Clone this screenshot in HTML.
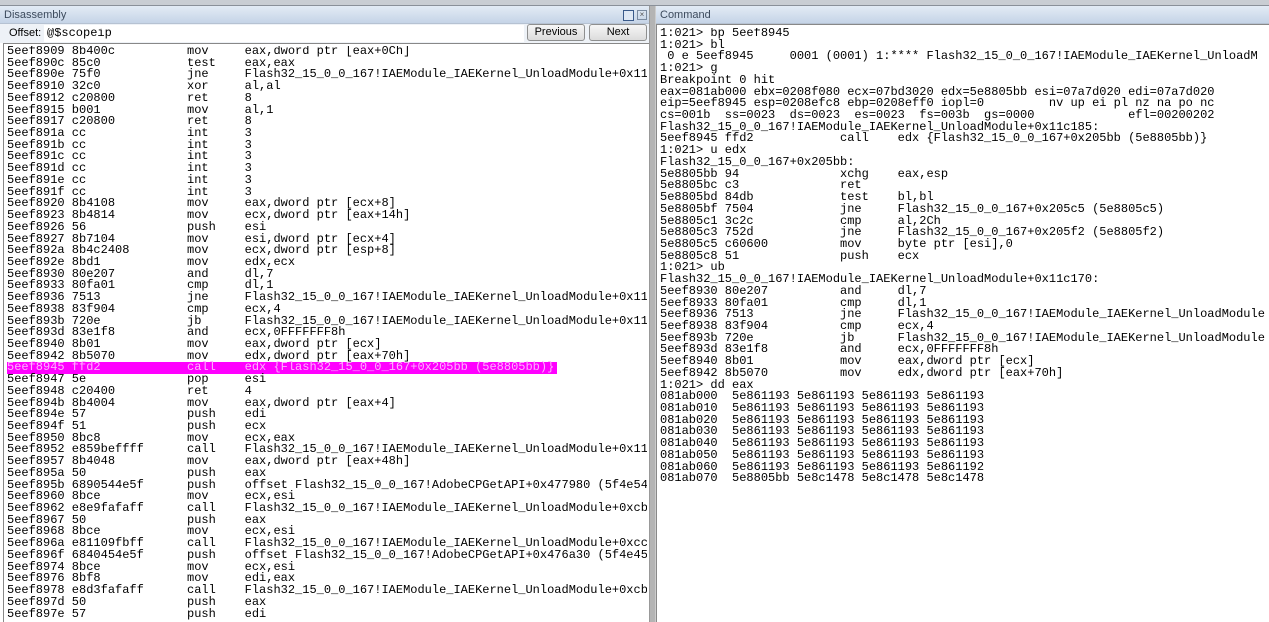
<!DOCTYPE html>
<html><head><meta charset="utf-8"><style>
*{margin:0;padding:0;box-sizing:border-box}
body{width:1269px;height:622px;overflow:hidden;background:#fff;position:relative;font-family:"Liberation Sans",sans-serif}
.top{position:absolute;left:0;top:0;width:1269px;height:6px;background:#c9cdd3;border-bottom:1px solid #8a9099}
.title{position:absolute;top:6px;height:18px;background:linear-gradient(#e3ebf5,#c5d4e7);font-size:11px;color:#3c4a5c;padding:3px 4px;border-bottom:1px solid #b6c2d2}
.split{position:absolute;left:649px;top:6px;width:7px;height:616px;background:#b4b4b4;border-left:1px solid #999;border-right:1px solid #ccc}
pre{position:absolute;font-family:"Liberation Mono",monospace;font-size:12px;line-height:11.72px;color:#000;white-space:pre;overflow:hidden}
.hl{background:#ff00ff;color:#ffb0ff;display:inline-block;width:550px}
.btn{position:absolute;top:24px;height:17px;border:1px solid #8e8f8f;border-radius:3px;background:linear-gradient(#f6f6f6,#dcdcdc);font-size:11px;text-align:center;line-height:15px;color:#000}
</style></head><body>
<div class="top"></div>
<div class="title" style="left:0;width:649px">Disassembly</div>
<div style="position:absolute;left:623px;top:10px;width:11px;height:11px;border:1px solid #3a5a8a;background:#dfe8f4"></div>
<div style="position:absolute;left:637px;top:10px;width:10px;height:10px;border:1px solid #7a8aa0;font-size:8px;line-height:8px;text-align:center;color:#555">×</div>
<div class="title" style="left:656px;width:613px">Command</div>
<div style="position:absolute;left:0;top:24px;width:649px;height:19px;background:#eef2f7"></div>
<div style="position:absolute;left:9px;top:27px;font-size:11px;color:#000">Offset:</div>
<div style="position:absolute;left:44px;top:25px;width:480px;height:17px;background:#fff"></div>
<pre style="left:47px;top:28px;">@$scopeip</pre>
<div class="btn" style="left:527px;width:58px">Previous</div>
<div class="btn" style="left:589px;width:58px">Next</div>
<div style="position:absolute;left:3px;top:43px;width:646px;height:579px;border:1px solid #888;border-right:none;border-bottom:none"></div>
<div class="split"></div>
<div style="position:absolute;left:656px;top:24px;width:613px;height:598px;border:1px solid #888;border-right:none;border-bottom:none"></div>
<pre style="left:7px;top:46px;width:640px;height:576px">5eef8909 8b400c          mov     eax,dword ptr [eax+0Ch]
5eef890c 85c0            test    eax,eax
5eef890e 75f0            jne     Flash32_15_0_0_167!IAEModule_IAEKernel_UnloadModule+0x11
5eef8910 32c0            xor     al,al
5eef8912 c20800          ret     8
5eef8915 b001            mov     al,1
5eef8917 c20800          ret     8
5eef891a cc              int     3
5eef891b cc              int     3
5eef891c cc              int     3
5eef891d cc              int     3
5eef891e cc              int     3
5eef891f cc              int     3
5eef8920 8b4108          mov     eax,dword ptr [ecx+8]
5eef8923 8b4814          mov     ecx,dword ptr [eax+14h]
5eef8926 56              push    esi
5eef8927 8b7104          mov     esi,dword ptr [ecx+4]
5eef892a 8b4c2408        mov     ecx,dword ptr [esp+8]
5eef892e 8bd1            mov     edx,ecx
5eef8930 80e207          and     dl,7
5eef8933 80fa01          cmp     dl,1
5eef8936 7513            jne     Flash32_15_0_0_167!IAEModule_IAEKernel_UnloadModule+0x11
5eef8938 83f904          cmp     ecx,4
5eef893b 720e            jb      Flash32_15_0_0_167!IAEModule_IAEKernel_UnloadModule+0x11
5eef893d 83e1f8          and     ecx,0FFFFFFF8h
5eef8940 8b01            mov     eax,dword ptr [ecx]
5eef8942 8b5070          mov     edx,dword ptr [eax+70h]
<span class="hl">5eef8945 ffd2            call    edx {Flash32_15_0_0_167+0x205bb (5e8805bb)}</span>
5eef8947 5e              pop     esi
5eef8948 c20400          ret     4
5eef894b 8b4004          mov     eax,dword ptr [eax+4]
5eef894e 57              push    edi
5eef894f 51              push    ecx
5eef8950 8bc8            mov     ecx,eax
5eef8952 e859beffff      call    Flash32_15_0_0_167!IAEModule_IAEKernel_UnloadModule+0x11
5eef8957 8b4048          mov     eax,dword ptr [eax+48h]
5eef895a 50              push    eax
5eef895b 6890544e5f      push    offset Flash32_15_0_0_167!AdobeCPGetAPI+0x477980 (5f4e54
5eef8960 8bce            mov     ecx,esi
5eef8962 e8e9fafaff      call    Flash32_15_0_0_167!IAEModule_IAEKernel_UnloadModule+0xcb
5eef8967 50              push    eax
5eef8968 8bce            mov     ecx,esi
5eef896a e81109fbff      call    Flash32_15_0_0_167!IAEModule_IAEKernel_UnloadModule+0xcc
5eef896f 6840454e5f      push    offset Flash32_15_0_0_167!AdobeCPGetAPI+0x476a30 (5f4e45
5eef8974 8bce            mov     ecx,esi
5eef8976 8bf8            mov     edi,eax
5eef8978 e8d3fafaff      call    Flash32_15_0_0_167!IAEModule_IAEKernel_UnloadModule+0xcb
5eef897d 50              push    eax
5eef897e 57              push    edi</pre>
<pre style="left:660px;top:28px;width:609px;height:594px">1:021&gt; bp 5eef8945
1:021&gt; bl
 0 e 5eef8945     0001 (0001) 1:**** Flash32_15_0_0_167!IAEModule_IAEKernel_UnloadM
1:021&gt; g
Breakpoint 0 hit
eax=081ab000 ebx=0208f080 ecx=07bd3020 edx=5e8805bb esi=07a7d020 edi=07a7d020
eip=5eef8945 esp=0208efc8 ebp=0208eff0 iopl=0         nv up ei pl nz na po nc
cs=001b  ss=0023  ds=0023  es=0023  fs=003b  gs=0000             efl=00200202
Flash32_15_0_0_167!IAEModule_IAEKernel_UnloadModule+0x11c185:
5eef8945 ffd2            call    edx {Flash32_15_0_0_167+0x205bb (5e8805bb)}
1:021&gt; u edx
Flash32_15_0_0_167+0x205bb:
5e8805bb 94              xchg    eax,esp
5e8805bc c3              ret
5e8805bd 84db            test    bl,bl
5e8805bf 7504            jne     Flash32_15_0_0_167+0x205c5 (5e8805c5)
5e8805c1 3c2c            cmp     al,2Ch
5e8805c3 752d            jne     Flash32_15_0_0_167+0x205f2 (5e8805f2)
5e8805c5 c60600          mov     byte ptr [esi],0
5e8805c8 51              push    ecx
1:021&gt; ub
Flash32_15_0_0_167!IAEModule_IAEKernel_UnloadModule+0x11c170:
5eef8930 80e207          and     dl,7
5eef8933 80fa01          cmp     dl,1
5eef8936 7513            jne     Flash32_15_0_0_167!IAEModule_IAEKernel_UnloadModule
5eef8938 83f904          cmp     ecx,4
5eef893b 720e            jb      Flash32_15_0_0_167!IAEModule_IAEKernel_UnloadModule
5eef893d 83e1f8          and     ecx,0FFFFFFF8h
5eef8940 8b01            mov     eax,dword ptr [ecx]
5eef8942 8b5070          mov     edx,dword ptr [eax+70h]
1:021&gt; dd eax
081ab000  5e861193 5e861193 5e861193 5e861193
081ab010  5e861193 5e861193 5e861193 5e861193
081ab020  5e861193 5e861193 5e861193 5e861193
081ab030  5e861193 5e861193 5e861193 5e861193
081ab040  5e861193 5e861193 5e861193 5e861193
081ab050  5e861193 5e861193 5e861193 5e861193
081ab060  5e861193 5e861193 5e861193 5e861192
081ab070  5e8805bb 5e8c1478 5e8c1478 5e8c1478</pre>
</body></html>
